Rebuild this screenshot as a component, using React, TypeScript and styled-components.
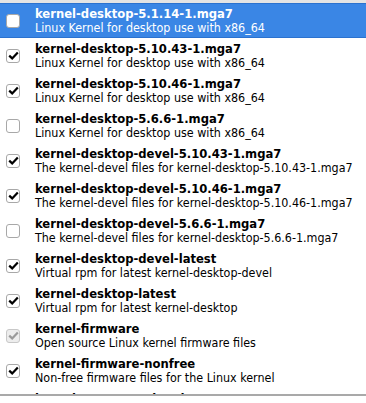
import * as React from "react";
import styled, { createGlobalStyle } from "styled-components";

type Pkg = {
  name: string;
  summary: string;
  checked: boolean;
  disabled?: boolean;
};

const packages: Pkg[] = [
  { name: "kernel-desktop-5.1.14-1.mga7", summary: "Linux Kernel for desktop use with x86_64", checked: false },
  { name: "kernel-desktop-5.10.43-1.mga7", summary: "Linux Kernel for desktop use with x86_64", checked: true },
  { name: "kernel-desktop-5.10.46-1.mga7", summary: "Linux Kernel for desktop use with x86_64", checked: true },
  { name: "kernel-desktop-5.6.6-1.mga7", summary: "Linux Kernel for desktop use with x86_64", checked: false },
  { name: "kernel-desktop-devel-5.10.43-1.mga7", summary: "The kernel-devel files for kernel-desktop-5.10.43-1.mga7", checked: true },
  { name: "kernel-desktop-devel-5.10.46-1.mga7", summary: "The kernel-devel files for kernel-desktop-5.10.46-1.mga7", checked: true },
  { name: "kernel-desktop-devel-5.6.6-1.mga7", summary: "The kernel-devel files for kernel-desktop-5.6.6-1.mga7", checked: false },
  { name: "kernel-desktop-devel-latest", summary: "Virtual rpm for latest kernel-desktop-devel", checked: true },
  { name: "kernel-desktop-latest", summary: "Virtual rpm for latest kernel-desktop", checked: true },
  { name: "kernel-firmware", summary: "Open source Linux kernel firmware files", checked: true, disabled: true },
  { name: "kernel-firmware-nonfree", summary: "Non-free firmware files for the Linux kernel", checked: true },
  { name: "kernel-userspace-headers", summary: "Linux kernel header files mostly used by userspace", checked: true },
];

function App() {
  const selected = 0;

  return (
    <>
      <GlobalStyle />
      <Window>
        <List>
          {packages.map((p, i) => (
            <Row key={p.name} $selected={i === selected}>
              <Box $disabled={!!p.disabled}>
                {p.checked && (
                  <svg width="11" height="9" viewBox="0 0 11 9">
                    <path
                      d="M1.2 4.6 L4.2 7.4 L9.8 1.4"
                      fill="none"
                      stroke={p.disabled ? "#9a9a9a" : "#000"}
                      strokeWidth="2.2"
                    />
                  </svg>
                )}
              </Box>
              <Text>
                <Name>{p.name}</Name>
                <Summary>{p.summary}</Summary>
              </Text>
            </Row>
          ))}
        </List>
        <Info>
          kernel-desktop-5.1.14-1.mga7 - Linux Kernel for desktop use with x86_64
        </Info>
      </Window>
    </>
  );
}

const GlobalStyle = createGlobalStyle`
  html, body {
    margin: 0;
    padding: 0;
    background: #fff;
    font-family: "DejaVu Sans Condensed", "DejaVu Sans", sans-serif;
    font-stretch: condensed;
  }
`;

const Window = styled.div`
  width: 366px;
  height: 403px;
  overflow: hidden;
  display: flex;
  flex-direction: column;
  background: #fff;
`;

const List = styled.div`
  height: 391px;
  flex: none;
  overflow: hidden;
  border-top: 3px solid #e4e4e4;
  border-bottom: 2px solid #a9a9a9;
`;

const Row = styled.div<{ $selected: boolean }>`
  height: 35px;
  box-sizing: border-box;
  display: flex;
  align-items: center;
  gap: 15px;
  padding-left: 6px;
  background: ${(p) => (p.$selected ? "#3a86e5" : "#fff")};
  border-top: 1px solid ${(p) => (p.$selected ? "#2b72cf" : "transparent")};
  border-bottom: 1px solid ${(p) => (p.$selected ? "#2b72cf" : "transparent")};
  color: ${(p) => (p.$selected ? "#fff" : "#000")};
`;

const Box = styled.div<{ $disabled: boolean }>`
  width: 14px;
  height: 14px;
  box-sizing: border-box;
  flex: none;
  border: 1px solid ${(p) => (p.$disabled ? "#c8c8c8" : "#a8a8a8")};
  border-radius: 3px;
  background: ${(p) => (p.$disabled ? "#ededed" : "#fff")};
  display: flex;
  align-items: center;
  justify-content: center;
`;

const Text = styled.div`
  display: flex;
  flex-direction: column;
  white-space: nowrap;
  margin-top: 1px;
`;

const Name = styled.span`
  font-weight: bold;
  font-size: 12.9px;
  line-height: 14px;
`;

const Summary = styled.span`
  font-size: 12.4px;
  line-height: 14px;
`;

const Info = styled.div`
  padding: 6px 0 0 4px;
  font-size: 19px;
  line-height: 22px;
  white-space: nowrap;
  color: #000;
`;

export default App;
